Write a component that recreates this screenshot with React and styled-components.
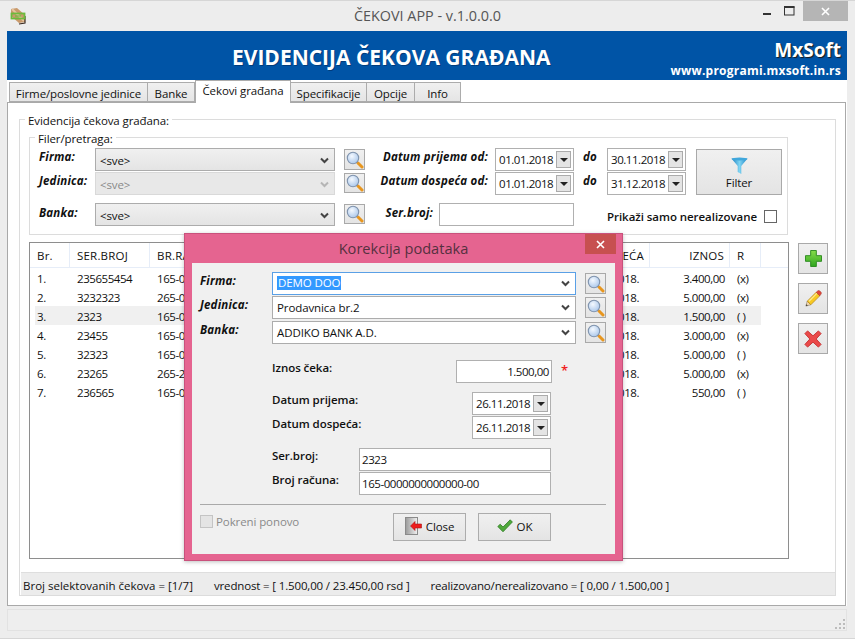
import React from 'react';
import styled, { createGlobalStyle } from 'styled-components';

const GlobalStyle = createGlobalStyle`
  html, body { margin: 0; padding: 0; background: #ededed; }
  * { box-sizing: border-box; }
`;

const FONT = `'Open Sans', 'Noto Sans', 'Liberation Sans', sans-serif`;

const Win = styled.div`
  position: relative;
  width: 855px;
  height: 639px;
  overflow: hidden;
  background: #ededed;
  border-top: 1px solid #d6d6d6;
  border-bottom: 1px solid #d6d6d6;
  font-family: ${FONT};
  font-size: 11.5px;
  letter-spacing: -0.1px;
  color: #111;
`;

const TitleBar = styled.div`
  position: relative;
  height: 30px;
  display: flex;
  align-items: center;
  justify-content: center;
  padding-bottom: 2px;
`;

const AppIcon = styled.svg`
  position: absolute;
  left: 9px;
  top: 6px;
`;

const TitleText = styled.div`
  font-size: 14.4px;
  letter-spacing: 0;
  color: #555;
`;

const WinControls = styled.div`
  position: absolute;
  right: 7px;
  top: 0;
  height: 20px;
  display: flex;
`;

const WinBtn = styled.div`
  width: ${({ $w }) => $w}px;
  height: 20px;
  display: flex;
  align-items: center;
  justify-content: center;
  background: ${({ $bg }) => $bg || 'transparent'};
`;

const Main = styled.div`
  margin: 0 8px 0 7px;
  height: 575px;
  background: #fff;
  display: flex;
  flex-direction: column;
`;

const Banner = styled.div`
  height: 50px;
  background: #0054a6;
  display: flex;
  justify-content: space-between;
  color: #fff;
`;

const BannerTitle = styled.div`
  margin-left: 225px;
  padding-top: 11px;
  font-size: 21px;
  line-height: 30px;
  font-weight: 700;
  letter-spacing: 0;
  white-space: nowrap;
  text-shadow: 1px 1px 0 rgba(0, 30, 70, 0.45);
`;

const Brand = styled.div`
  padding: 6px 6px 0 0;
  text-align: right;
  font-weight: 700;
  white-space: nowrap;
`;

const BrandName = styled.div`
  font-size: 19px;
  line-height: 26px;
  letter-spacing: 0;
  text-shadow: 1px 1px 1px #1a1a1a;
`;

const BrandUrl = styled.div`
  font-size: 12px;
  line-height: 16px;
  letter-spacing: 0.23px;
`;

const TabStrip = styled.div`
  height: 22px;
  display: flex;
  align-items: flex-end;
  padding-left: 2px;
`;

const Tab = styled.div`
  position: relative;
  z-index: ${({ $active }) => ($active ? 1 : 0)};
  width: ${({ $w }) => $w}px;
  height: ${({ $active }) => ($active ? 23 : 20)}px;
  margin-bottom: ${({ $active }) => ($active ? -1 : 0)}px;
  padding-top: ${({ $active }) => ($active ? 2 : 3)}px;
  border: 1px solid #acacac;
  border-bottom: ${({ $active }) => ($active ? '0' : '1px solid #acacac')};
  border-left-width: ${({ $first, $active }) => ($first || $active ? 1 : 0)}px;
  background: ${({ $active }) => ($active ? '#fff' : 'linear-gradient(#f0f0f0, #e5e5e5)')};
  text-align: center;
  line-height: 16px;
  white-space: nowrap;
`;

const TabPage = styled.div`
  flex: 1;
  margin-right: 1px;
  border: 1px solid #a9a9a9;
  padding: 8px 9px 9px 11px;
  display: flex;
`;

const Group = styled.fieldset`
  margin: 0;
  padding: 0;
  min-width: 0;
  width: 100%;
  border: 1px solid #dcdcdc;
`;

const Legend = styled.legend`
  margin-left: 5px;
  padding: 0 3px;
  height: 16px;
  line-height: 20px;
`;

const TopWrap = styled.div`
  padding: 2px 47px 0 9px;
`;

const FilterGrid = styled.div`
  display: grid;
  grid-template-columns: 56px 240px 30px 130px 79px 33px 79px 96px;
  grid-template-rows: 24px 24px 7px 24px;
  padding: 3px 0 7px 9px;
`;

const Spacer = styled.div`
  grid-column: 1 / -1;
`;

const BoldItalic = styled.div`
  font-weight: 700;
  font-style: italic;
  line-height: 17px;
  white-space: nowrap;
  letter-spacing: 0.2px;
  text-align: ${({ $right }) => ($right ? 'right' : 'left')};
  padding-right: ${({ $right }) => ($right ? 7 : 0)}px;
  margin-top: ${({ $mt }) => $mt || 0}px;
  color: #111;
`;

const DoLabel = styled(BoldItalic)`
  padding-left: 9px;
`;

const Combo = styled.div`
  height: 23px;
  display: flex;
  align-items: center;
  justify-content: space-between;
  padding: ${({ $white }) => ($white ? '0 5px 1px 4px' : '1px 5px 0 4px')};
  border: 1px solid ${({ $focus, $off }) => ($focus ? '#5aa0e6' : $off ? '#d9d9d9' : '#acacac')};
  background: ${({ $white, $off }) =>
    $white ? '#fff' : $off ? '#e8e8e8' : 'linear-gradient(#f0f0f0, #e4e4e4)'};
  color: ${({ $off }) => ($off ? '#8a8a8a' : '#111')};
`;

const Selected = styled.span`
  display: inline-block;
  background: #3399ff;
  color: #fff;
  line-height: 14px;
  padding: 0 1px;
  margin-left: 0;
`;

const SearchCell = styled.div`
  display: flex;
  justify-content: flex-end;
  align-items: flex-start;
  padding-top: 1px;
`;

const IconBtn = styled.div`
  width: ${({ $w }) => $w}px;
  height: ${({ $h }) => $h}px;
  border: 1px solid #a9a9a9;
  background: linear-gradient(#f0f0f0, #e4e4e4);
  display: flex;
  align-items: center;
  justify-content: center;
`;

const DateBox = styled.div`
  width: 79px;
  height: 23px;
  border: 1px solid #b0b0b0;
  background: #fff;
  display: flex;
  align-items: center;
  justify-content: space-between;
  padding: 0 2px 0 3px;
  letter-spacing: -0.45px;
`;

const DateArrow = styled.div`
  width: 15px;
  height: 17px;
  border: 1px solid #ababab;
  background: #e4e4e4;
  display: flex;
  align-items: center;
  justify-content: center;
  &::after {
    content: '';
    border-left: 4px solid transparent;
    border-right: 4px solid transparent;
    border-top: 4px solid #222;
  }
`;

const FilterBtn = styled(IconBtn)`
  grid-column: 8;
  grid-row: 1 / span 2;
  justify-self: end;
  margin-top: 1px;
  flex-direction: column;
  gap: 0;
  padding-top: 3px;
`;

const SerCell = styled.div`
  grid-column: 4 / span 2;
  display: flex;
  justify-content: flex-end;
`;

const SerLabel = styled(BoldItalic)`
  margin: 1px 6px 0 0;
`;

const TextBox = styled.div`
  width: ${({ $w }) => $w}px;
  height: 23px;
  margin-right: ${({ $mr }) => $mr || 0}px;
  border: 1px solid #b0b0b0;
  background: #fff;
  display: flex;
  align-items: center;
  justify-content: ${({ $right }) => ($right ? 'flex-end' : 'flex-start')};
  padding: 0 2px;
  letter-spacing: -0.45px;
`;

const ShowCell = styled.div`
  grid-column: 7 / span 2;
  display: flex;
  align-items: center;
  gap: 7px;
  padding-top: 3px;
`;

const BoldText = styled.div`
  font-weight: 600;
  white-space: nowrap;
  line-height: 16px;
  letter-spacing: -0.05px;
`;

const CheckBox = styled.div`
  width: 13px;
  height: 13px;
  margin-top: ${({ $mt }) => $mt || 0}px;
  border: 1px solid ${({ $off }) => ($off ? '#c4c4c4' : '#666')};
  background: ${({ $off }) => ($off ? '#e4e4e4' : '#fff')};
`;

const MiddleRow = styled.div`
  display: flex;
  gap: 9px;
  padding: 7px 0 0 9px;
`;

const Table = styled.div`
  width: 760px;
  height: 317px;
  border: 1px solid #8e8e8e;
  background: #fff;
  overflow: hidden;
`;

const Cols = styled.div`
  display: grid;
  grid-template-columns: 35px 80px 180px 160px 160px 80px 31px 32px;
  margin-left: 5px;
  background: ${({ $sel }) => ($sel ? '#f0f0f0' : 'transparent')};
  width: ${({ $sel }) => ($sel ? 726 : 758)}px;
  overflow: hidden;
`;

const HeadRow = styled(Cols)`
  margin-left: 0;
  padding-left: 5px;
  height: 25px;
  border-bottom: 1px solid #e6edf8;
`;

const HeadCell = styled.div`
  height: 24px;
  line-height: 26px;
  padding: 0 5px 0 7px;
  border-right: 1px solid #e6edf8;
  text-align: ${({ $right }) => ($right ? 'right' : 'left')};
  letter-spacing: 0.2px;
  white-space: nowrap;
  overflow: hidden;
  &:first-child {
    padding-left: 2px;
  }
`;

const Cell = styled.div`
  height: 19px;
  line-height: 21px;
  padding: 0 ${({ $pr }) => $pr || 5}px 0 7px;
  text-align: ${({ $right }) => ($right ? 'right' : 'left')};
  letter-spacing: -0.45px;
  white-space: nowrap;
  overflow: hidden;
  &:first-child {
    padding-left: 2px;
  }
`;

const SideButtons = styled.div`
  display: flex;
  flex-direction: column;
  gap: 9px;
  padding-top: 1px;
`;

const StatusBar = styled.div`
  margin: 13px 0 0 1px;
  height: 23px;
  background: #ececec;
  border-top: 1px solid #dedede;
  display: flex;
  align-items: center;
  padding: 2px 0 0 2px;
  white-space: nowrap;
`;

const StatusItem = styled.span`
  margin-right: 21px;
  letter-spacing: ${({ $ls }) => $ls}px;
`;

const Grip = styled.div`
  margin: 3px 8px 0 7px;
  height: 22px;
  border: 1px solid #e2e2e2;
  background: #eeeeee;
  display: flex;
  justify-content: flex-end;
  align-items: flex-end;
`;

/* dialog */
const Dialog = styled.div`
  position: absolute;
  left: 184px;
  top: 232px;
  width: 439px;
  height: 328px;
  background: #e56490;
  border: 1px solid #c9517c;
  box-shadow: 0 1px 4px rgba(0, 0, 0, 0.25);
  padding: 0 7px 6px 7px;
  display: flex;
  flex-direction: column;
`;

const DialogTitle = styled.div`
  position: relative;
  height: 29px;
  text-align: center;
  font-size: 14.6px;
  letter-spacing: 0;
  line-height: 29px;
  color: #55303f;
`;

const DialogClose = styled.div`
  position: absolute;
  right: -1px;
  top: 0;
  width: 31px;
  height: 20px;
  background: #c75050;
  display: flex;
  align-items: center;
  justify-content: center;
`;

const DialogBody = styled.div`
  flex: 1;
  background: #f0f0f0;
  padding: 9px 9px 0 8px;
  display: flex;
  flex-direction: column;
`;

const DialogCombos = styled.div`
  display: grid;
  grid-template-columns: 72px 304px 30px;
  grid-template-rows: 24px 25px 23px;
`;

const Fields = styled.div`
  margin-left: 72px;
  width: 279px;
  display: flex;
  flex-direction: column;
  margin-top: ${({ $mt }) => $mt}px;
  gap: 1px;
`;

const FieldRow = styled.div`
  display: flex;
  justify-content: space-between;
  height: 23px;
  position: relative;
`;

const Star = styled.span`
  position: absolute;
  left: 100%;
  top: 1px;
  margin-left: 10px;
  color: #f02020;
  font-size: 13px;
  font-weight: 600;
`;

const Rule = styled.div`
  height: 1px;
  background: #a9a9a9;
  margin-top: 9px;
  width: 406px;
`;

const Footer = styled.div`
  display: flex;
  align-items: flex-start;
  width: 351px;
  margin-top: 8px;
`;

const DisabledLabel = styled.span`
  margin: 1px auto 0 3px;
  line-height: 16px;
  color: #8a8a8a;
`;

const PushBtn = styled.div`
  width: 73px;
  height: 28px;
  margin-left: 12px;
  border: 1px solid #acacac;
  background: linear-gradient(#f0f0f0, #e4e4e4);
  display: flex;
  align-items: center;
  justify-content: center;
  gap: 4px;
  padding-bottom: 2px;
`;

/* drawings */
const SearchIcon = () => (
  <svg width="18" height="18" viewBox="0 0 18 18">
    <defs>
      <radialGradient id="glass" cx="40%" cy="35%" r="70%">
        <stop offset="0" stopColor="#f4f9ff" />
        <stop offset="1" stopColor="#a9c6ea" />
      </radialGradient>
    </defs>
    <line x1="10.5" y1="10.5" x2="12.5" y2="12.5" stroke="#8d8d8d" strokeWidth="2" />
    <line x1="12" y1="12" x2="16" y2="16" stroke="#e8961e" strokeWidth="3" strokeLinecap="round" />
    <circle cx="7" cy="7" r="5.7" fill="url(#glass)" stroke="#7f93ad" strokeWidth="1.1" />
  </svg>
);

const ChevronIcon = ({ color = '#444' }) => (
  <svg width="9" height="7" viewBox="0 0 9 7">
    <path d="M1 1.5 L4.5 5 L8 1.5" fill="none" stroke={color} strokeWidth="2" />
  </svg>
);

const FunnelIcon = () => (
  <svg width="17" height="18" viewBox="0 0 17 18">
    <defs>
      <linearGradient id="funnel" x1="0" x2="1" y1="0" y2="0">
        <stop offset="0" stopColor="#1c7fc0" />
        <stop offset="0.5" stopColor="#7fd4f2" />
        <stop offset="1" stopColor="#1c86c8" />
      </linearGradient>
    </defs>
    <path d="M0.5 1.5 H16.5 L10.3 9 V17 L6.7 15 V9 Z" fill="url(#funnel)" />
    <ellipse cx="8.5" cy="2" rx="8" ry="1.4" fill="#3fa7dc" />
  </svg>
);

const PlusIcon = () => (
  <svg width="17" height="17" viewBox="0 0 18 18">
    <defs>
      <linearGradient id="plus" x1="0" x2="0" y1="0" y2="1">
        <stop offset="0" stopColor="#86dc4a" />
        <stop offset="1" stopColor="#2fa51f" />
      </linearGradient>
    </defs>
    <path
      d="M6 .5 H12 V6 H17.5 V12 H12 V17.5 H6 V12 H.5 V6 H6 Z"
      fill="url(#plus)"
      stroke="#2b8a1e"
    />
  </svg>
);

const PencilIcon = () => (
  <svg width="17" height="17" viewBox="0 0 19 19">
    <path d="M1 18 L2.5 12.5 L6.5 16.5 Z" fill="#f3d9b0" stroke="#7a6a50" strokeWidth=".6" />
    <path d="M1 18 L1.6 15.8 L3.2 17.4 Z" fill="#333" />
    <path d="M2.5 12.5 L12.5 2.5 L16.5 6.5 L6.5 16.5 Z" fill="#f7c922" stroke="#b5841a" strokeWidth=".8" />
    <path d="M4.5 12.5 L13.5 3.5" stroke="#fdeb8d" strokeWidth="1.4" />
    <path d="M12.5 2.5 L14.5 .8 Q15.5 .2 16.5 1 L18 2.5 Q18.6 3.5 18 4.5 L16.5 6.5 Z" fill="#e0483a" stroke="#a8322a" strokeWidth=".6" />
  </svg>
);

const CrossIcon = () => (
  <svg width="18" height="18" viewBox="0 0 20 20">
    <path
      d="M4 1 L10 6.5 L16 1 L19 4 L13.5 10 L19 16 L16 19 L10 13.5 L4 19 L1 16 L6.5 10 L1 4 Z"
      fill="#ea4a4a"
      stroke="#c62f2f"
      strokeLinejoin="round"
    />
  </svg>
);

const DoorIcon = () => (
  <svg width="17" height="18" viewBox="0 0 17 18">
    <defs>
      <linearGradient id="door" x1="0" x2="1" y1="0" y2="0">
        <stop offset="0" stopColor="#9a9a9a" />
        <stop offset="1" stopColor="#f2f2f2" />
      </linearGradient>
    </defs>
    <rect x=".5" y=".5" width="12" height="17" fill="url(#door)" stroke="#8a8a8a" />
    <path d="M5.5 9 L10 4.5 V7 H16.5 V11 H10 V13.5 Z" fill="#ee1c1c" stroke="#a81414" strokeWidth=".6" />
  </svg>
);

const CheckIcon = () => (
  <svg width="16" height="14" viewBox="0 0 16 14">
    <path
      d="M.8 7.5 L3.2 5.2 L6 8 L13.2 .8 L15.4 3 L6 12.8 Z"
      fill="#4fa83a"
      stroke="#2f7c24"
      strokeWidth=".8"
      strokeLinejoin="round"
    />
  </svg>
);

const GripIcon = () => (
  <svg width="11" height="11" viewBox="0 0 11 11">
    <path
      d="M8 0h2v2H8z M4 4h2v2H4z M8 4h2v2H8z M0 8h2v2H0z M4 8h2v2H4z M8 8h2v2H8z"
      fill="#bcbcbc"
    />
  </svg>
);

const LogoIcon = () => (
  <AppIcon width="18" height="18" viewBox="0 0 18 18">
    <path d="M2 2 L8 1 L16 8 L16 15 L10 16 L2 9 Z" fill="#c99a6c" />
    <path d="M3 2 L15 14" stroke="#e6c5a0" strokeWidth="2" />
    <path d="M16 9 V16 L10 17" fill="none" stroke="#3a2a20" strokeWidth="1.2" />
    <rect x="2.5" y="6.5" width="13" height="5" fill="none" stroke="#6cbb3c" strokeWidth="1.8" />
    <path d="M6 9 H12" stroke="#6cbb3c" strokeWidth="1.2" />
  </AppIcon>
);

const Search = ({ h = 21 }) => (
  <SearchCell>
    <IconBtn $w={21} $h={h}>
      <SearchIcon />
    </IconBtn>
  </SearchCell>
);

const DatePicker = ({ value }) => (
  <DateBox>
    <span>{value}</span>
    <DateArrow />
  </DateBox>
);

const TABS = [
  { label: 'Firme/poslovne jedinice', w: 139, first: true },
  { label: 'Banke', w: 47 },
  { label: 'Čekovi građana', w: 96, active: true },
  { label: 'Specifikacije', w: 76 },
  { label: 'Opcije', w: 48 },
  { label: 'Info', w: 46 },
];

const ROWS = [
  ['1.', '235655454', '165-0000000000000-00', '01.10.2018.', '01.11.2018.', '3.400,00', '(x)'],
  ['2.', '3232323', '265-0000000000000-00', '05.10.2018.', '05.11.2018.', '5.000,00', '(x)'],
  ['3.', '2323', '165-0000000000000-00', '26.11.2018.', '26.11.2018.', '1.500,00', '( )'],
  ['4.', '23455', '165-0000000000000-00', '10.10.2018.', '10.11.2018.', '3.000,00', '(x)'],
  ['5.', '32323', '165-0000000000000-00', '12.10.2018.', '12.11.2018.', '5.000,00', '( )'],
  ['6.', '23265', '265-2000000000000-00', '15.10.2018.', '15.11.2018.', '5.000,00', '(x)'],
  ['7.', '236565', '165-0000000000000-00', '20.10.2018.', '20.11.2018.', '550,00', '( )'],
];

export default function App() {
  return (
    <>
      <GlobalStyle />
      <Win>
        <TitleBar>
          <LogoIcon />
          <TitleText>ČEKOVI APP - v.1.0.0.0</TitleText>
          <WinControls>
            <WinBtn $w={18}>
              <svg width="9" height="9" viewBox="0 0 9 9">
                <rect x="0" y="6" width="8" height="2" fill="#333" />
              </svg>
            </WinBtn>
            <WinBtn $w={27}>
              <svg width="11" height="10" viewBox="0 0 11 10">
                <rect x=".5" y="1" width="9.5" height="8" fill="none" stroke="#333" />
                <rect x="0" y="0" width="10.5" height="2" fill="#333" />
              </svg>
            </WinBtn>
            <WinBtn $w={45} $bg="#b5b5b5">
              <svg width="9" height="9" viewBox="0 0 9 9">
                <path d="M1 1 L8 8 M8 1 L1 8" stroke="#fff" strokeWidth="1.6" />
              </svg>
            </WinBtn>
          </WinControls>
        </TitleBar>

        <Main>
          <Banner>
            <BannerTitle>EVIDENCIJA ČEKOVA GRAĐANA</BannerTitle>
            <Brand>
              <BrandName>MxSoft</BrandName>
              <BrandUrl>www.programi.mxsoft.in.rs</BrandUrl>
            </Brand>
          </Banner>

          <TabStrip>
            {TABS.map((t) => (
              <Tab key={t.label} $w={t.w} $active={t.active} $first={t.first}>
                {t.label}
              </Tab>
            ))}
          </TabStrip>

          <TabPage>
            <Group>
              <Legend>Evidencija čekova građana:</Legend>
              <TopWrap>
                <Group>
                  <Legend>Filer/pretraga:</Legend>
                  <FilterGrid>
                    <BoldItalic>Firma:</BoldItalic>
                    <Combo>
                      <span>&lt;sve&gt;</span>
                      <ChevronIcon />
                    </Combo>
                    <Search />
                    <BoldItalic $right>Datum prijema od:</BoldItalic>
                    <DatePicker value="01.01.2018" />
                    <DoLabel>do</DoLabel>
                    <DatePicker value="30.11.2018" />
                    <FilterBtn $w={86} $h={46}>
                      <FunnelIcon />
                      <span>Filter</span>
                    </FilterBtn>

                    <BoldItalic>Jedinica:</BoldItalic>
                    <Combo $off>
                      <span>&lt;sve&gt;</span>
                      <ChevronIcon color="#b5b5b5" />
                    </Combo>
                    <Search h={20} />
                    <BoldItalic $right>Datum dospeća od:</BoldItalic>
                    <DatePicker value="01.01.2018" />
                    <DoLabel>do</DoLabel>
                    <DatePicker value="31.12.2018" />

                    <Spacer />

                    <BoldItalic $mt={1}>Banka:</BoldItalic>
                    <Combo>
                      <span>&lt;sve&gt;</span>
                      <ChevronIcon />
                    </Combo>
                    <Search h={20} />
                    <SerCell>
                      <SerLabel>Ser.broj:</SerLabel>
                      <TextBox $w={135} />
                    </SerCell>
                    <ShowCell>
                      <BoldText>Prikaži samo nerealizovane</BoldText>
                      <CheckBox />
                    </ShowCell>
                  </FilterGrid>
                </Group>
              </TopWrap>

              <MiddleRow>
                <Table>
                  <HeadRow>
                    <HeadCell>Br.</HeadCell>
                    <HeadCell>SER.BROJ</HeadCell>
                    <HeadCell>BR.RAČUNA</HeadCell>
                    <HeadCell>DATUM PRIJEMA</HeadCell>
                    <HeadCell $right>DATUM DOSPEĆA</HeadCell>
                    <HeadCell $right>IZNOS</HeadCell>
                    <HeadCell>R</HeadCell>
                  </HeadRow>
                  {ROWS.map((r) => (
                    <Cols key={r[0]} $sel={r[0] === '3.'}>
                      <Cell>{r[0]}</Cell>
                      <Cell>{r[1]}</Cell>
                      <Cell>{r[2]}</Cell>
                      <Cell>{r[3]}</Cell>
                      <Cell $right $pr={11}>{r[4]}</Cell>
                      <Cell $right>{r[5]}</Cell>
                      <Cell>{r[6]}</Cell>
                    </Cols>
                  ))}
                </Table>
                <SideButtons>
                  <IconBtn $w={30} $h={31}>
                    <PlusIcon />
                  </IconBtn>
                  <IconBtn $w={30} $h={31}>
                    <PencilIcon />
                  </IconBtn>
                  <IconBtn $w={30} $h={31}>
                    <CrossIcon />
                  </IconBtn>
                </SideButtons>
              </MiddleRow>

              <StatusBar>
                <StatusItem $ls={0}>Broj selektovanih čekova = [1/7]</StatusItem>
                <StatusItem $ls={-0.15}>vrednost = [ 1.500,00 / 23.450,00 rsd ]</StatusItem>
                <StatusItem $ls={-0.15}>realizovano/nerealizovano = [ 0,00 / 1.500,00 ]</StatusItem>
              </StatusBar>
            </Group>
          </TabPage>
        </Main>

        <Grip>
          <GripIcon />
        </Grip>

        <Dialog>
          <DialogTitle>
            Korekcija podataka
            <DialogClose>
              <svg width="9" height="9" viewBox="0 0 9 9">
                <path d="M1 1 L8 8 M8 1 L1 8" stroke="#fff" strokeWidth="1.6" />
              </svg>
            </DialogClose>
          </DialogTitle>
          <DialogBody>
            <DialogCombos>
              <BoldItalic>Firma:</BoldItalic>
              <Combo $white $focus>
                <Selected>DEMO DOO</Selected>
                <ChevronIcon />
              </Combo>
              <Search h={21} />
              <BoldItalic>Jedinica:</BoldItalic>
              <Combo $white>
                <span>Prodavnica br.2</span>
                <ChevronIcon />
              </Combo>
              <Search h={21} />
              <BoldItalic>Banka:</BoldItalic>
              <Combo $white>
                <span>ADDIKO BANK A.D.</span>
                <ChevronIcon />
              </Combo>
              <Search h={21} />
            </DialogCombos>

            <Fields $mt={16}>
              <FieldRow>
                <BoldText>Iznos čeka:</BoldText>
                <TextBox $w={96} $mr={-1} $right>
                  1.500,00
                </TextBox>
                <Star>*</Star>
              </FieldRow>
            </Fields>

            <Fields $mt={9}>
              <FieldRow>
                <BoldText>Datum prijema:</BoldText>
                <DatePicker value="26.11.2018" />
              </FieldRow>
              <FieldRow>
                <BoldText>Datum dospeća:</BoldText>
                <DatePicker value="26.11.2018" />
              </FieldRow>
            </Fields>

            <Fields $mt={9}>
              <FieldRow>
                <BoldText>Ser.broj:</BoldText>
                <TextBox $w={192}>2323</TextBox>
              </FieldRow>
              <FieldRow>
                <BoldText>Broj računa:</BoldText>
                <TextBox $w={192}>165-0000000000000-00</TextBox>
              </FieldRow>
            </Fields>

            <Rule />

            <Footer>
              <CheckBox $off $mt={2} />
              <DisabledLabel>Pokreni ponovo</DisabledLabel>
              <PushBtn>
                <DoorIcon />
                <span>Close</span>
              </PushBtn>
              <PushBtn>
                <CheckIcon />
                <span>OK</span>
              </PushBtn>
            </Footer>
          </DialogBody>
        </Dialog>
      </Win>
    </>
  );
}
